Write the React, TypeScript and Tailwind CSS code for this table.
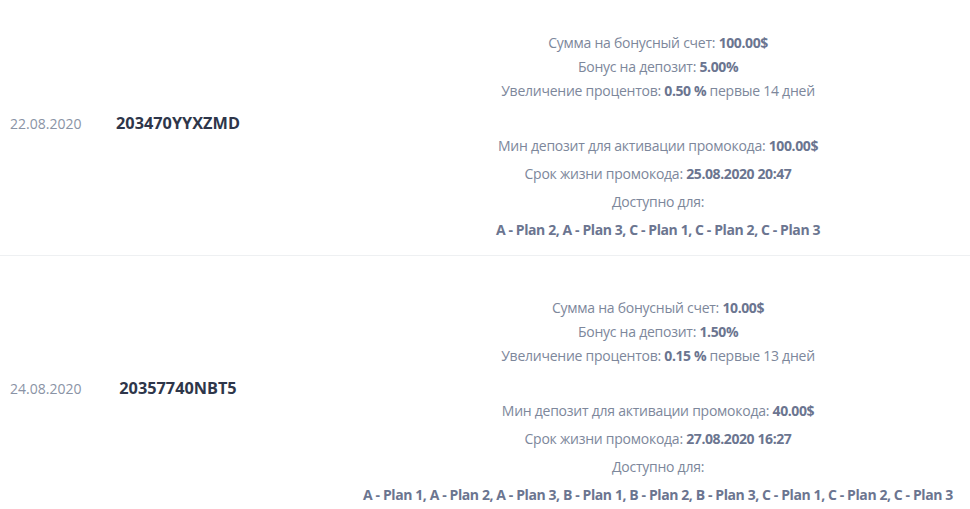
import React from 'react';

interface PromoRecord {
  date: string;
  code: string;
  bonus: string;
  depositBonus: string;
  increase: string;
  days: number;
  minDeposit: string;
  expires: string;
  plans: string;
}

const promos: PromoRecord[] = [
  {
    date: '22.08.2020',
    code: '203470YYXZMD',
    bonus: '100.00$',
    depositBonus: '5.00%',
    increase: '0.50 %',
    days: 14,
    minDeposit: '100.00$',
    expires: '25.08.2020 20:47',
    plans: 'A - Plan 2, A - Plan 3, C - Plan 1, C - Plan 2, C - Plan 3',
  },
  {
    date: '24.08.2020',
    code: '20357740NBT5',
    bonus: '10.00$',
    depositBonus: '1.50%',
    increase: '0.15 %',
    days: 13,
    minDeposit: '40.00$',
    expires: '27.08.2020 16:27',
    plans: 'A - Plan 1, A - Plan 2, A - Plan 3, B - Plan 1, B - Plan 2, B - Plan 3, C - Plan 1, C - Plan 2, C - Plan 3',
  },
];

const Val = ({ children }: { children: React.ReactNode }) => (
  <b className="font-bold text-[#6b7590] tracking-[-0.4px]">{children}</b>
);

export default function App() {
  return (
    <div className="w-[970px] h-[509px] overflow-hidden bg-white font-['Open_Sans',sans-serif]">
      <div className="-mt-[9px]">
        {promos.map((p) => (
          <div key={p.code} className="flex items-center border-b border-[#eef0f2]">
            <div className="w-[96px] shrink-0 pl-[10px] text-[14px] text-[#8a93a5]">{p.date}</div>
            <div className="w-[164px] shrink-0 text-center text-[16.3px] font-bold text-[#2e364a]">{p.code}</div>
            <div className="flex-1 min-w-0 pl-[92px] pr-[6px] pt-[40px] pb-[11px] text-center text-[14px] tracking-[-0.25px] text-[#7d879b] whitespace-nowrap">
              <div className="leading-[24px]">
                <div>Сумма на бонусный счет: <Val>{p.bonus}</Val></div>
                <div>Бонус на депозит: <Val>{p.depositBonus}</Val></div>
                <div>Увеличение процентов: <Val>{p.increase}</Val> первые {p.days} дней</div>
              </div>
              <div className="mt-[29px] leading-[28px]">
                <div>Мин депозит для активации промокода: <Val>{p.minDeposit}</Val></div>
                <div>Срок жизни промокода: <Val>{p.expires}</Val></div>
                <div>Доступно для:</div>
                <div><Val>{p.plans}</Val></div>
              </div>
            </div>
          </div>
        ))}
      </div>
    </div>
  );
}
